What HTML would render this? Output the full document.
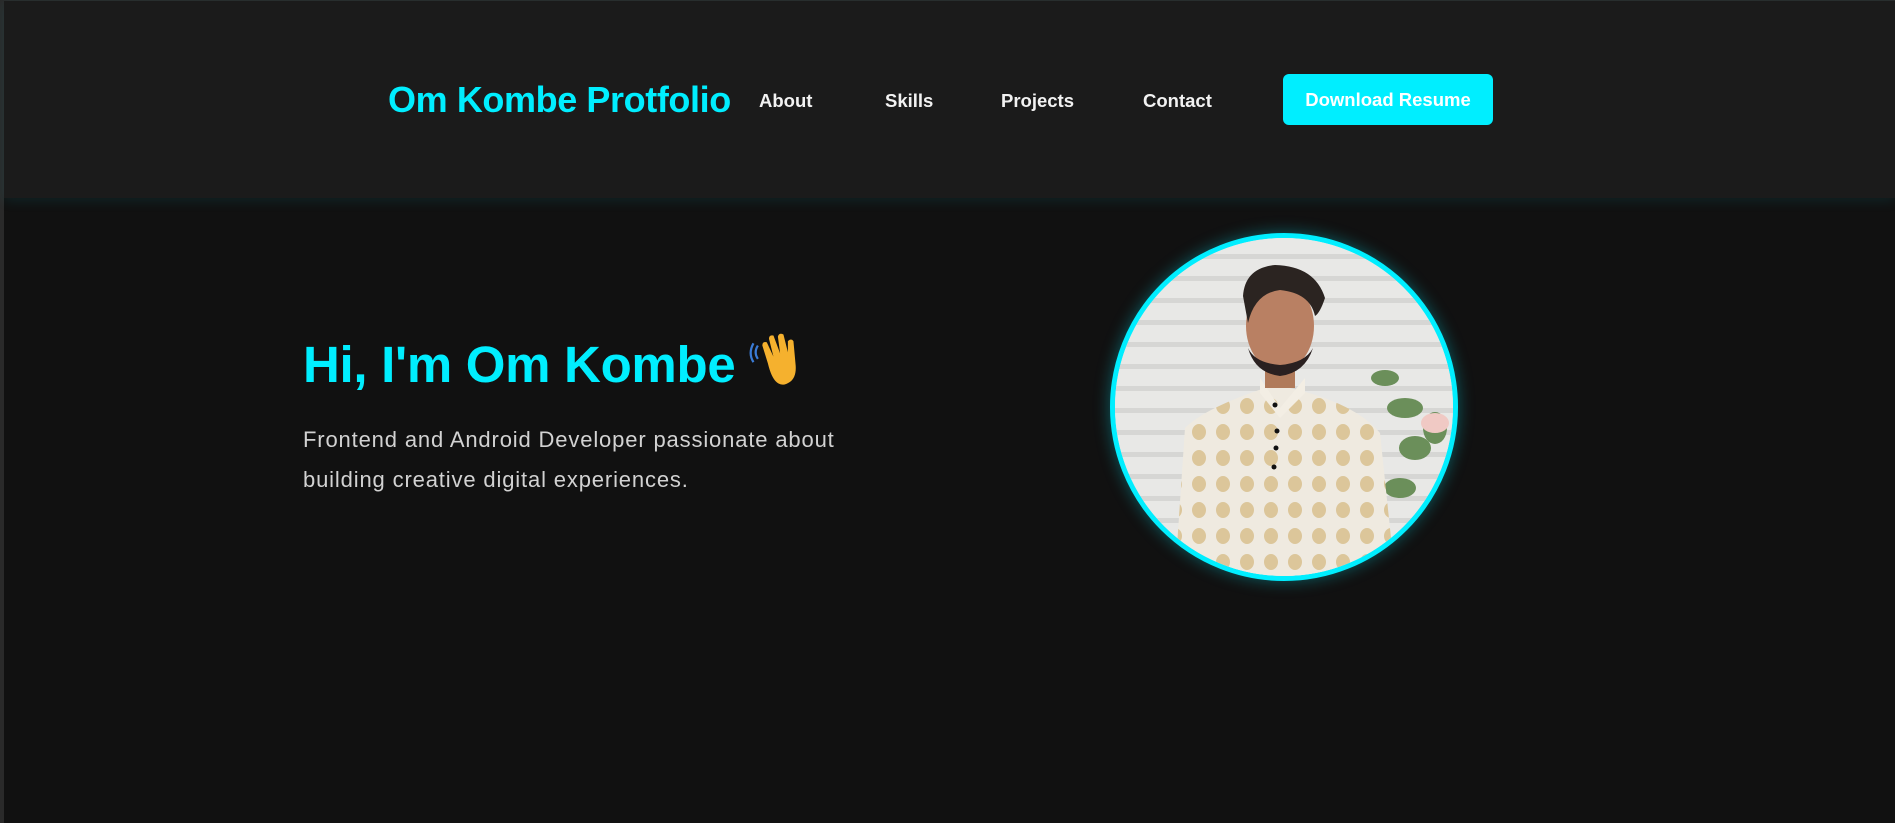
<!DOCTYPE html>
<html><head><meta charset="utf-8"><style>
*{margin:0;padding:0;box-sizing:border-box}
html,body{width:1895px;height:823px;overflow:hidden;background:#111;font-family:"Liberation Sans",sans-serif}
.frame{position:absolute;left:0;top:0;width:1895px;height:823px;border-left:4px solid #2a2a2a;border-top:1px solid #2a2a2a}
header{position:absolute;left:4px;top:1px;right:0;height:197px;background:#1b1b1b;box-shadow:0 3px 12px rgba(0,200,220,0.10)}
.logo{position:absolute;left:384px;top:78px;font-size:36px;font-weight:bold;color:#00eeff;letter-spacing:-0.4px}
.nav{position:absolute;top:89px;font-size:18.5px;font-weight:bold;color:#f2f2f2}
.btn{position:absolute;left:1279px;top:73px;width:210px;height:51px;background:#00eeff;border-radius:6px;color:#fff;font-size:18.5px;font-weight:bold;text-align:center;line-height:51px}
h1{position:absolute;left:303px;top:330px;font-size:51px;font-weight:bold;color:#00eeff;white-space:nowrap;letter-spacing:-0.3px}
p{position:absolute;left:303px;top:420px;font-size:22px;letter-spacing:0.85px;line-height:40px;color:#d2d2d2;width:565px}
.pic{position:absolute;left:1110px;top:233px;width:348px;height:348px;border-radius:50%;border:5px solid #00eeff;box-shadow:0 0 16px rgba(0,238,255,0.35);overflow:hidden;background:#e6e6e4}
</style></head><body>
<div class="frame"></div>
<header>
<div class="logo">Om Kombe Protfolio</div>
<div class="nav" style="left:755px">About</div>
<div class="nav" style="left:881px">Skills</div>
<div class="nav" style="left:997px">Projects</div>
<div class="nav" style="left:1139px">Contact</div>
<div class="btn">Download Resume</div>
</header>
<h1>Hi, I'm Om Kombe <svg width="60" height="60" viewBox="0 0 54 54" style="vertical-align:-8px"><path d="M8 14q-4 6 0 12M4 12q-5 9 0 17" stroke="#3a7bd5" stroke-width="2" fill="none"/><path d="M17 30 L12 14 q0-4 4-3 L22 24 L18 8 q0-4 4-3 L28 21 L26 6 q1-4 5-2 L35 20 L35 10 q3-3 5 0 L42 32 q1 14-10 17 q-10 2-15-19z" fill="#f5b12e"/></svg></h1>
<p>Frontend and Android Developer passionate about building creative digital experiences.</p>
<div class="pic"><svg width="338" height="338" viewBox="0 0 338 338">
<defs><pattern id="st" width="338" height="22" patternUnits="userSpaceOnUse"><rect width="338" height="22" fill="#e8e8e6"/><rect y="16" width="338" height="5" fill="#d6d6d4"/></pattern>
<pattern id="k" width="24" height="26" patternUnits="userSpaceOnUse"><rect width="24" height="26" fill="#efeae0"/><ellipse cx="12" cy="12" rx="7" ry="8" fill="#dcc69a"/></pattern></defs>
<rect width="338" height="338" fill="url(#st)"/>
<g fill="#6b8f5a"><ellipse cx="270" cy="140" rx="14" ry="8"/><ellipse cx="290" cy="170" rx="18" ry="10"/><ellipse cx="300" cy="210" rx="16" ry="12"/><ellipse cx="285" cy="250" rx="16" ry="10"/><ellipse cx="320" cy="190" rx="12" ry="16"/></g>
<ellipse cx="320" cy="185" rx="14" ry="10" fill="#f0c9c4"/>
<path d="M60 338 L70 190 Q90 170 150 150 L175 150 Q240 165 265 195 L280 338Z" fill="url(#k)"/>
<path d="M145 140 L165 170 L190 140 L190 155 L165 180 L145 155Z" fill="#f3eee4"/>
<circle cx="160" cy="167" r="2.5" fill="#111"/><circle cx="162" cy="193" r="2.5" fill="#111"/><circle cx="161" cy="210" r="2.5" fill="#111"/><circle cx="159" cy="229" r="2.5" fill="#111"/>
<rect x="150" y="110" width="30" height="40" fill="#b07a5a"/>
<ellipse cx="165" cy="88" rx="34" ry="45" fill="#b98063"/>
<path d="M133 110 Q140 135 165 138 Q190 135 198 110 Q190 125 165 127 Q140 125 133 110Z" fill="#2a2020"/>
<path d="M128 58 Q130 30 160 27 Q200 28 210 60 Q205 75 200 78 Q195 55 165 52 Q140 55 133 85Z" fill="#2b2421"/>
</svg></div>
</body></html>
